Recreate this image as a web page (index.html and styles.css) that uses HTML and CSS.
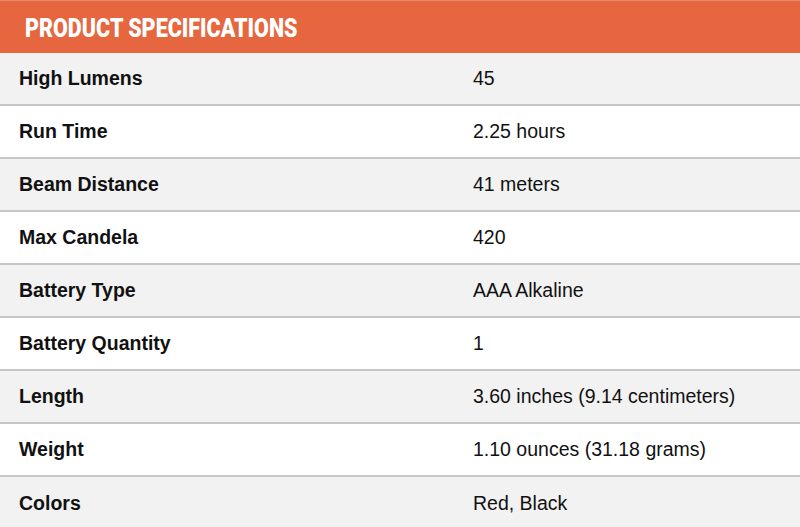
FILE: index.html
```html
<!DOCTYPE html>
<html>
<head>
<meta charset="utf-8">
<link rel="stylesheet" href="styles.css">
</head>
<body>
<div class="specs">
  <div class="specs-header"><h2 class="specs-title">PRODUCT SPECIFICATIONS</h2></div>
  <div class="row alt"><div class="label">High Lumens</div><div class="value">45</div></div>
  <div class="row"><div class="label">Run Time</div><div class="value">2.25 hours</div></div>
  <div class="row alt"><div class="label">Beam Distance</div><div class="value">41 meters</div></div>
  <div class="row"><div class="label">Max Candela</div><div class="value">420</div></div>
  <div class="row alt"><div class="label">Battery Type</div><div class="value">AAA Alkaline</div></div>
  <div class="row"><div class="label">Battery Quantity</div><div class="value">1</div></div>
  <div class="row alt"><div class="label">Length</div><div class="value">3.60 inches (9.14 centimeters)</div></div>
  <div class="row"><div class="label">Weight</div><div class="value">1.10 ounces (31.18 grams)</div></div>
  <div class="row alt"><div class="label">Colors</div><div class="value">Red, Black</div></div>
</div>
</body>
</html>
```
FILE: styles.css
```css
html, body {
  margin: 0;
  padding: 0;
  background: #ffffff;
}
body {
  font-family: "Liberation Sans", Arial, sans-serif;
  color: #111;
  overflow: hidden;
}
.specs {
  width: 800px;
}
.specs-header {
  height: 53px;
  background: #e5663f;
  border-top: 1px solid #e98a6c;
  box-sizing: border-box;
  display: flex;
  align-items: center;
  padding-left: 25px;
  padding-top: 3px;
}
.specs-title {
  margin: 0;
  font-family: Roboto, "Liberation Sans", sans-serif;
  font-weight: 900;
  font-size: 25px;
  color: #ffffff;
  transform: scaleX(0.86);
  transform-origin: left center;
  white-space: nowrap;
}
.row {
  display: grid;
  grid-template-columns: 473px 1fr;
  align-items: center;
  height: 53px;
  box-sizing: border-box;
  border-bottom: 2px solid #c6c6c6;
  background: #ffffff;
  font-size: 19.5px;
}
.row.alt {
  background: #f2f2f2;
}
.row:last-child {
  border-bottom: none;
}
.label {
  font-weight: 700;
  padding-left: 19px;
}
.value {
  font-weight: 400;
}
```
